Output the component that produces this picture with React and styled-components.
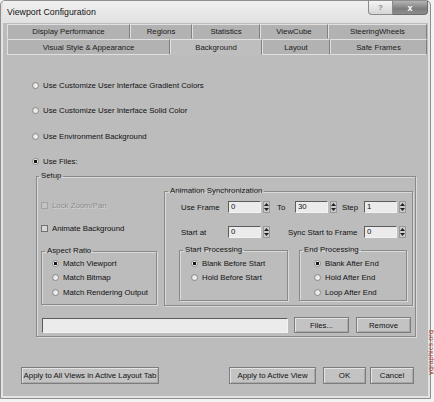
import React from 'react'
import styled, { createGlobalStyle } from 'styled-components'

const GlobalStyle = createGlobalStyle`
html, body { margin: 0; padding: 0; }
body {
  background: #f3f3f3;
  font-family: "Liberation Sans", Arial, sans-serif;
  font-size: 7.8px;
  color: #111;
}
`

const Page = styled.div`
position: relative;
width: 434px;
height: 402px;
overflow: hidden;
`
const Window = styled.div`
width: 431px;
height: 399px;
box-sizing: border-box;
border: 1px solid #8e8e8e;
border-radius: 5px 5px 0 0;
background: #e3e3e3;
padding: 0 2px 2px 2px;
display: flex;
flex-direction: column;
`
const TitleBar = styled.div`
height: 22px;
flex: none;
display: flex;
align-items: flex-start;
justify-content: space-between;
padding-left: 4px;
background: linear-gradient(#f0f0f0, #e1e1e1);
`
const Title = styled.span`
font-size: 8.8px;
line-height: 22px;
color: #111;
`
const Caption = styled.div`
display: flex;
height: 14px;
`
const HelpBtn = styled.div`
width: 25px;
box-sizing: border-box;
border: 1px solid #8a8a8a;
border-top: none;
border-radius: 0 0 0 4px;
background: linear-gradient(#f4f4f4, #d6d6d6);
display: flex;
align-items: center;
justify-content: center;
color: #8a8a8a;
font-size: 8px;
font-weight: bold;
`
const CloseBtn = styled.div`
width: 35px;
box-sizing: border-box;
border: 1px solid #6c6c6c;
border-top: none;
border-left: none;
border-radius: 0 0 4px 0;
background: linear-gradient(#b4b4b4, #7d7d7d 60%, #8d8d8d);
display: flex;
align-items: center;
justify-content: center;
color: #fff;
font-size: 9px;
font-weight: bold;
`
const Client = styled.div`
flex: 1;
display: flex;
flex-direction: column;
background: #bcbcbc;
padding: 1px 1px 0 4px;
`
const TabRow = styled.div`
display: flex;
height: ${p => p.$h}px;
`
const Tab = styled.div`
width: ${p => p.$w}px;
box-sizing: border-box;
display: flex;
align-items: center;
justify-content: center;
white-space: nowrap;
background: ${p => (p.$active ? '#bebebe' : '#b2b2b2')};
border-top: 1px solid #e0e0e0;
border-left: 1px solid #e0e0e0;
border-right: 1px solid #808080;
border-bottom: 1px solid ${p => (p.$active ? '#bebebe' : p.$low ? '#e0e0e0' : 'transparent')};
color: #1a1a1a;
`
const Panel = styled.div`
display: flex;
flex-direction: column;
padding: 24px 0 0 25px;
`
const Options = styled.div`
display: flex;
flex-direction: column;
gap: ${p => p.$gap}px;
`
const Option = styled.label`
display: flex;
align-items: center;
gap: 4px;
height: ${p => p.$h || 10}px;
white-space: nowrap;
`
const Radio = styled.span`
width: 7px;
height: 7px;
flex: none;
box-sizing: border-box;
border-radius: 50%;
border: 1px solid #8d8d8d;
background: ${p =>
  p.$on
    ? 'radial-gradient(circle, #111 0 1.4px, #f0f0f0 1.9px)'
    : 'radial-gradient(circle at 65% 65%, #f6f6f6, #d2d2d2)'};
`
const Check = styled.span`
width: 7px;
height: 7px;
flex: none;
box-sizing: border-box;
border: 1px solid ${p => (p.$disabled ? '#a2a2a2' : '#707070')};
background: ${p => (p.$disabled ? '#c4c4c4' : '#d6d6d6')};
`
const Text = styled.span`
color: ${p => (p.$disabled ? '#8e8e8e' : '#111')};
text-shadow: ${p => (p.$disabled ? '1px 1px 0 #d4d4d4' : 'none')};
`
const Group = styled.fieldset`
margin: 0;
padding: 0;
min-width: 0;
width: ${p => p.$w}px;
box-sizing: border-box;
border: 1px solid #8a8a8a;
box-shadow: 1px 1px 0 #d9d9d9, inset 1px 1px 0 #d9d9d9;
`
const Legend = styled.legend`
margin-left: ${p => p.$m ?? 3}px;
padding: 0 2px;
line-height: 10px;
height: 10px;
`
const GroupBody = styled.div`
padding: ${p => p.$pad};
`
const SetupCols = styled.div`
display: flex;
align-items: flex-start;
gap: 7px;
`
const LeftCol = styled.div`
width: 116px;
display: flex;
flex-direction: column;
padding-top: 19px;
`
const Spacer = styled.div`
height: ${p => p.$h}px;
`
const SpinRow = styled.div`
display: flex;
align-items: center;
height: 12px;
padding-left: 2px;
`
const Label = styled.span`
width: ${p => p.$w}px;
margin-left: ${p => p.$m || 0}px;
flex: none;
white-space: nowrap;
`
const Spinner = styled.div`
display: flex;
gap: 2px;
height: 12px;
`
const Field = styled.div`
width: ${p => p.$w}px;
height: ${p => p.$h || 12}px;
box-sizing: border-box;
background: #ebebeb;
border-top: 1px solid #5c5c5c;
border-left: 1px solid #5c5c5c;
border-bottom: 1px solid #f2f2f2;
border-right: 1px solid #f2f2f2;
padding-left: 2px;
line-height: 10px;
color: #111;
`
const Arrows = styled.div`
width: 7px;
box-sizing: border-box;
display: flex;
flex-direction: column;
align-items: center;
justify-content: center;
gap: 2px;
background: #c9c9c9;
border: 1px solid #9a9a9a;
`
const ProcRow = styled.div`
display: flex;
gap: 11px;
margin-top: 7px;
`
const FilesRow = styled.div`
display: flex;
align-items: center;
margin-top: 11px;
padding-left: 1px;
`
const Button = styled.div`
width: ${p => p.$w}px;
height: ${p => p.$h || 17}px;
margin-left: ${p => p.$m || 0}px;
box-sizing: border-box;
display: flex;
align-items: center;
justify-content: center;
white-space: nowrap;
background: #c3c3c3;
border: 1px solid #7c7c7c;
box-shadow: inset 1px 1px 0 #e4e4e4, inset -1px -1px 0 #a9a9a9;
color: #111;
`
const Footer = styled.div`
margin-top: auto;
display: flex;
align-items: center;
padding: 0 13px 12px 14px;
`
const Push = styled.div`
flex: 1;
`
const Watermark = styled.div`
position: absolute;
right: 0;
top: 330px;
writing-mode: vertical-rl;
transform: rotate(180deg);
font-size: 7px;
line-height: 6px;
color: #a23a3a;
letter-spacing: 0.2px;
`

function SpinArrows() {
  return (
    <Arrows>
      <svg width="5" height="3" viewBox="0 0 5 3"><path d="M0 3 L2.5 0 L5 3 Z" fill="#222" /></svg>
      <svg width="5" height="3" viewBox="0 0 5 3"><path d="M0 0 L2.5 3 L5 0 Z" fill="#222" /></svg>
    </Arrows>
  )
}

function Spin({ value }) {
  return (
    <Spinner>
      <Field $w={33}>{value}</Field>
      <SpinArrows />
    </Spinner>
  )
}

function RadioItem({ on, children, h }) {
  return (
    <Option $h={h}>
      <Radio $on={on} />
      <Text>{children}</Text>
    </Option>
  )
}

const row1 = [
  ['Display Performance', 123],
  ['Regions', 62],
  ['Statistics', 68],
  ['ViewCube', 68],
  ['SteeringWheels', 99],
]
const row2 = [
  ['Visual Style & Appearance', 163],
  ['Background', 92, true],
  ['Layout', 68],
  ['Safe Frames', 97],
]

export default function App() {
  return (
    <Page>
      <GlobalStyle />
      <Window>
        <TitleBar>
          <Title>Viewport Configuration</Title>
          <Caption>
            <HelpBtn>?</HelpBtn>
            <CloseBtn>x</CloseBtn>
          </Caption>
        </TitleBar>
        <Client>
          <TabRow $h={15}>
            {row1.map(([t, w]) => (
              <Tab key={t} $w={w}>{t}</Tab>
            ))}
          </TabRow>
          <TabRow $h={16}>
            {row2.map(([t, w, a]) => (
              <Tab key={t} $w={w} $active={a} $low>{t}</Tab>
            ))}
          </TabRow>
          <Panel>
            <Options $gap={13.5}>
              <RadioItem h={12}>Use Customize User Interface Gradient Colors</RadioItem>
              <RadioItem h={12}>Use Customize User Interface Solid Color</RadioItem>
              <RadioItem h={12}>Use Environment Background</RadioItem>
              <RadioItem h={12} on>Use Files:</RadioItem>
            </Options>
            <Spacer $h={3.5} />
            <Group $w={380} style={{ marginLeft: 4 }}>
              <Legend $m={2}>Setup</Legend>
              <GroupBody $pad="0 1px 3px 4px">
                <SetupCols>
                  <LeftCol>
                    <Option>
                      <Check $disabled />
                      <Text $disabled>Lock Zoom/Pan</Text>
                    </Option>
                    <Spacer $h={13} />
                    <Option>
                      <Check />
                      <Text>Animate Background</Text>
                    </Option>
                    <Spacer $h={13} />
                    <Group $w={116}>
                      <Legend>Aspect Ratio</Legend>
                      <GroupBody $pad="2px 0 7px 10px">
                        <Options $gap={4.5}>
                          <RadioItem on>Match Viewport</RadioItem>
                          <RadioItem>Match Bitmap</RadioItem>
                          <RadioItem>Match Rendering Output</RadioItem>
                        </Options>
                      </GroupBody>
                    </Group>
                  </LeftCol>
                  <Group $w={249} style={{ marginTop: 5 }}>
                    <Legend>Animation Synchronization</Legend>
                    <GroupBody $pad="5px 4px 4px 14px">
                      <SpinRow>
                        <Label $w={47}>Use Frame</Label>
                        <Spin value="0" />
                        <Label $w={18} $m={7}>To</Label>
                        <Spin value="30" />
                        <Label $w={22} $m={5}>Step</Label>
                        <Spin value="1" />
                      </SpinRow>
                      <Spacer $h={13} />
                      <SpinRow>
                        <Label $w={47}>Start at</Label>
                        <Spin value="0" />
                        <Label $w={76} $m={18}>Sync Start to Frame</Label>
                        <Spin value="0" />
                      </SpinRow>
                      <ProcRow>
                        <Group $w={109}>
                          <Legend>Start Processing</Legend>
                          <GroupBody $pad="3px 0 3px 11px">
                            <Options $gap={4.5}>
                              <RadioItem on>Blank Before Start</RadioItem>
                              <RadioItem>Hold Before Start</RadioItem>
                            </Options>
                          </GroupBody>
                        </Group>
                        <Group $w={108}>
                          <Legend $m={2}>End Processing</Legend>
                          <GroupBody $pad="3px 0 3px 14px">
                            <Options $gap={4.5}>
                              <RadioItem on>Blank After End</RadioItem>
                              <RadioItem>Hold After End</RadioItem>
                              <RadioItem>Loop After End</RadioItem>
                            </Options>
                          </GroupBody>
                        </Group>
                      </ProcRow>
                    </GroupBody>
                  </Group>
                </SetupCols>
                <FilesRow>
                  <Field $w={246} $h={15} />
                  <Button $w={55} $h={16} $m={6}>Files...</Button>
                  <Button $w={55} $h={16} $m={7}>Remove</Button>
                </FilesRow>
              </GroupBody>
            </Group>
          </Panel>
          <Footer>
            <Button $w={138}>Apply to All Views in Active Layout Tab</Button>
            <Push />
            <Button $w={87}>Apply to Active View</Button>
            <Button $w={43} $m={7}>OK</Button>
            <Button $w={44} $m={4}>Cancel</Button>
          </Footer>
        </Client>
      </Window>
      <Watermark>ygraphics.org</Watermark>
    </Page>
  )
}
